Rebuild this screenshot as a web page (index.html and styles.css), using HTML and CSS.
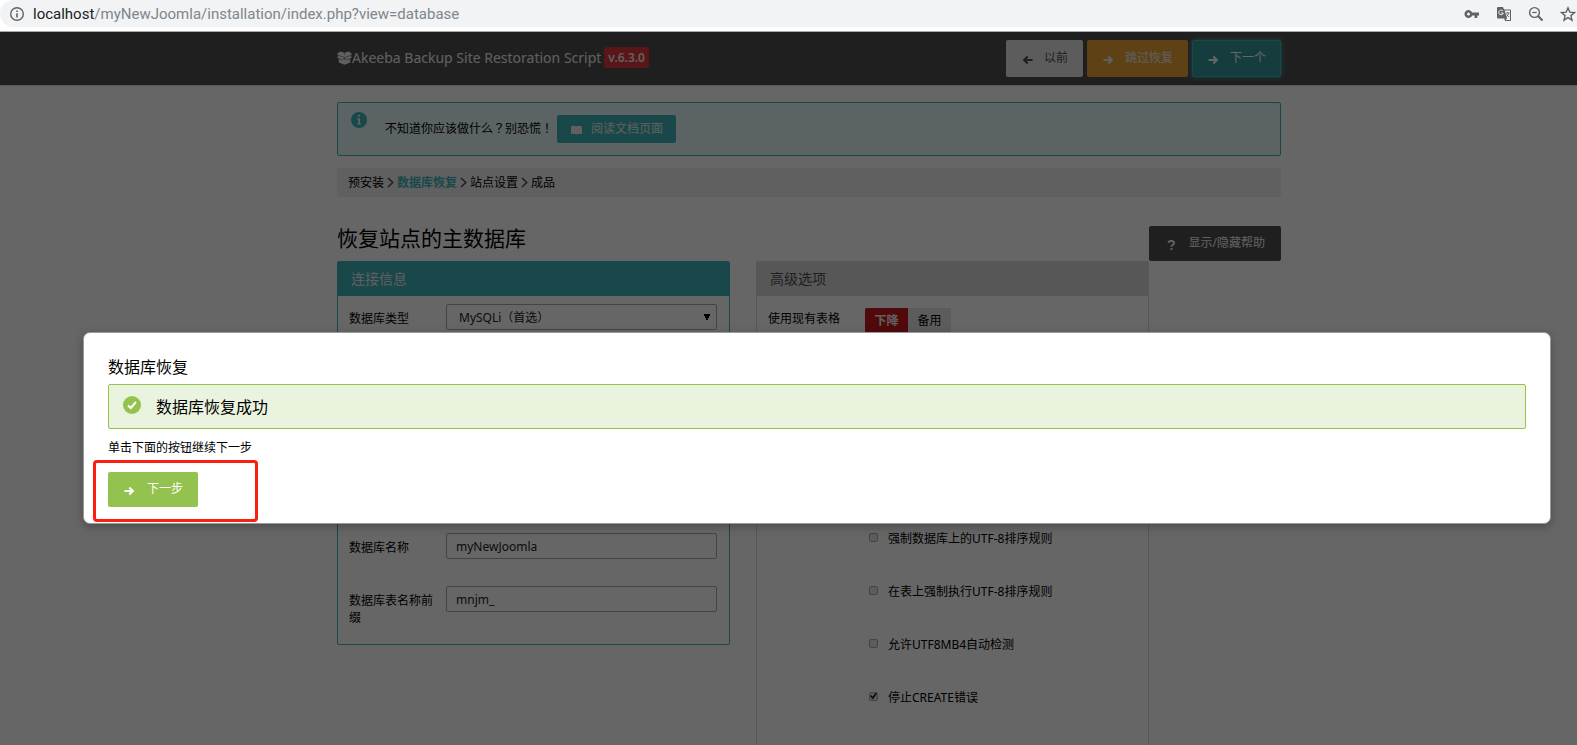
FILE: index.html
```
<!DOCTYPE html>
<html lang="zh-CN">
<head>
<meta charset="utf-8">
<title>Akeeba Backup Site Restoration Script</title>
<link rel="stylesheet" href="styles.css">
</head>
<body>
<svg class="defs" aria-hidden="true">
  <symbol id="arrow-right" viewBox="0 0 11 10"><path d="M0.5 5H9M5.3 1.6L8.8 5L5.3 8.4" fill="none" stroke="currentColor" stroke-width="2.1"/></symbol>
  <symbol id="arrow-left" viewBox="0 0 11 10"><path d="M10.5 5H2M5.7 1.6L2.2 5L5.7 8.4" fill="none" stroke="currentColor" stroke-width="2.1"/></symbol>
  <symbol id="chevron" viewBox="0 0 7 11"><path d="M1 1L5.7 5.5L1 10" fill="none" stroke="currentColor" stroke-width="1.6"/></symbol>
</svg>

<div class="browser">
  <div class="address">
    <svg class="info" viewBox="0 0 16 16" aria-hidden="true"><circle cx="8" cy="8" r="6.3" fill="none" stroke="currentColor" stroke-width="1.4"/><path d="M7.2 7.2h1.6v4.3H7.2zM7.2 4.5h1.6v1.6H7.2z" fill="currentColor"/></svg>
    <span class="url"><b>localhost</b>/myNewJoomla/installation/index.php?view=database</span>
    <button class="tool" aria-label="密码"><svg viewBox="0 0 16 16"><path d="M8.2 6.6A4 4 0 1 0 8.2 9.4H10.6V12H13.3V9.4H15V6.6ZM4.5 9.5A1.5 1.5 0 1 1 4.5 6.5A1.5 1.5 0 0 1 4.5 9.5Z" fill="currentColor" fill-rule="evenodd"/></svg></button>
    <button class="tool" aria-label="翻译"><svg viewBox="0 0 16 16"><path d="M2 1H7L8 3.5H14.2Q15 3.5 15 4.3V14.2Q15 15 14.2 15H9L8.2 12.5H2Q1 12.5 1 11.5V2Q1 1 2 1Z" fill="currentColor"/><path d="M8.7 4.4H14V14H9.7L11 12.4Z" fill="#f1f3f4"/><path d="M7 5.2A2.3 2.3 0 1 0 7.3 7H5.2" fill="none" stroke="#f1f3f4" stroke-width="1"/><path d="M9.7 7H13.6M11.6 6V7M12.9 7Q12.3 9.3 10.3 10.8M10.5 8Q11.3 9.9 13.1 10.9" fill="none" stroke="currentColor" stroke-width=".8"/></svg></button>
    <button class="tool" aria-label="缩放"><svg viewBox="0 0 16 16"><circle cx="6.5" cy="6.5" r="4.9" fill="none" stroke="currentColor" stroke-width="1.4"/><path d="M10 10L14.5 14.5" stroke="currentColor" stroke-width="1.9"/><path d="M4.3 6.5H8.7" stroke="currentColor" stroke-width="1.2"/></svg></button>
    <button class="tool" aria-label="收藏"><svg viewBox="0 0 16 16"><path d="M8 1.8L9.8 6.1L14.5 6.5L10.9 9.6L12 14.2L8 11.7L4 14.2L5.1 9.6L1.5 6.5L6.2 6.1Z" fill="none" stroke="currentColor" stroke-width="1.4"/></svg></button>
  </div>
</div>

<div class="page">
  <header class="header">
    <div class="container header-row">
      <div class="brand">
        <svg class="box" viewBox="0 0 15 14" aria-hidden="true"><path d="M3 .5L7.5 1.8L12 .5L15 3L13.4 4.6L15 6.4L13.2 7.6V11.6L7.5 13.8L1.8 11.6V7.6L0 6.4L1.6 4.6L0 3Z" fill="currentColor"/><path d="M2 4.6L7.5 6.6L13 4.6M7.5 6.6V9M1.8 7.6L5.5 9L7.5 6.8L9.5 9L13.2 7.6M7.5 2V4" fill="none" stroke="#514f50" stroke-width=".5"/></svg>
        <span>Akeeba Backup Site Restoration Script</span>
        <span class="version">v.6.3.0</span>
      </div>
      <nav class="actions">
        <button class="btn light"><svg><use href="#arrow-left"/></svg>以前</button>
        <button class="btn orange"><svg><use href="#arrow-right"/></svg>跳过恢复</button>
        <button class="btn focused"><svg><use href="#arrow-right"/></svg>下一个</button>
      </nav>
    </div>
  </header>

  <main class="main">
    <div class="container">
      <div class="notice">
        <svg class="badge" viewBox="0 0 18 18" aria-hidden="true"><circle cx="9" cy="9" r="8" fill="currentColor"/><path d="M8.2 4h1.8v1.8H8.2zM7.2 7.3H10v5h1v1.2H7.2v-1.2h1V8.5h-1z" fill="#e6f8fb"/></svg>
        <span class="message">不知道你应该做什么<span class="centred" lang="zh-TW">？</span>别恐慌<span class="centred" lang="zh-TW">！</span></span>
        <a class="btn small" href="#docs"><svg viewBox="0 0 11 10"><path d="M0 1.5Q3 0 5.5 1.3Q8 0 11 1.5V9H6.5L5.5 10L4.5 9H0Z" fill="currentColor"/></svg>阅读文档页面</a>
      </div>
      <ol class="steps">
        <li>预安装</li>
        <li><svg><use href="#chevron"/></svg><strong>数据库恢复</strong></li>
        <li><svg><use href="#chevron"/></svg>站点设置</li>
        <li><svg><use href="#chevron"/></svg>成品</li>
      </ol>

      <div class="title-row">
        <h1>恢复站点的主数据库</h1>
        <button class="btn dark"><svg viewBox="0 0 11 10"><path d="M2.4 2.8Q2.8 .9 5.4 .9T8.2 3Q8.2 4.1 6.6 4.9Q5.5 5.5 5.5 6.8M5.5 8V10" fill="none" stroke="currentColor" stroke-width="2"/></svg>显示/隐藏帮助</button>
      </div>

      <div class="panels">
        <section class="panel teal">
          <h2>连接信息</h2>
          <div class="field"><label for="dbtype">数据库类型</label><select id="dbtype"><option>MySQLi（首选）</option></select></div>
          <div class="covered"></div>
          <div class="field"><label for="dbname">数据库名称</label><input type="text" id="dbname" value="myNewJoomla"></div>
          <div class="field"><label for="prefix">数据库表名称前缀</label><input type="text" id="prefix" value="mnjm_"></div>
        </section>
        <section class="panel grey">
          <h2>高级选项</h2>
          <div class="field wide"><span>使用现有表格</span><div class="switch"><button class="on">下降</button><button>备用</button></div></div>
          <div class="covered"></div>
          <label class="check"><input type="checkbox">强制数据库上的UTF-8排序规则</label>
          <label class="check"><input type="checkbox">在表上强制执行UTF-8排序规则</label>
          <label class="check"><input type="checkbox">允许UTF8MB4自动检测</label>
          <label class="check"><input type="checkbox" checked>停止CREATE错误</label>
        </section>
      </div>
    </div>
  </main>

  <div class="overlay">
    <div class="modal" role="dialog" aria-labelledby="modal-title">
      <h3 id="modal-title">数据库恢复</h3>
      <div class="success">
        <svg viewBox="0 0 18 18" aria-hidden="true"><circle cx="9" cy="9" r="9" fill="currentColor"/><path d="M5 9.4L7.8 12L13 6" fill="none" stroke="#fff" stroke-width="2"/></svg>
        <span>数据库恢复成功</span>
      </div>
      <p>单击下面的按钮继续下一步</p>
      <div class="next">
        <button class="btn green"><svg><use href="#arrow-right"/></svg>下一步</button>
        <div class="marker"></div>
      </div>
    </div>
  </div>
</div>
</body>
</html>
```
FILE: styles.css
```
* { box-sizing: border-box; }
html, body { height: 100%; }
body {
  margin: 0;
  display: flex;
  flex-direction: column;
  overflow: hidden;
  background: #fff;
  color: #000;
  font: 12px/17px "Noto Sans", "Noto Sans CJK SC", sans-serif;
}
button, input, select { font: inherit; color: inherit; }
.defs { position: absolute; width: 0; height: 0; }

/* Browser bar */
.browser { height: 32px; padding-bottom: 4px; border-bottom: 1px solid #ababab; flex: none; }
.address {
  display: flex;
  align-items: center;
  height: 27px;
  padding-left: 9px;
  background: #f1f3f4;
  border-radius: 14px 0 0 14px;
  color: #5f6368;
}
.info { width: 16px; height: 16px; margin-right: 8px; }
.url { flex: 1; font: 15px/20px Roboto, sans-serif; color: #80868b; }
.url b { font-weight: 400; color: #202124; }
.tool { flex: none; width: 32px; height: 24px; padding: 4px 8px; border: 0; background: none; color: #5f6368; }
.tool:last-child { width: 25px; padding-right: 0; }
.tool svg { display: block; width: 16px; height: 16px; }

/* Page */
.page { position: relative; flex: 1; overflow: hidden; }
.header, .main { padding-left: 41px; }
.container { max-width: 944px; margin: 0 auto; }
.header { background: #514f50; color: #efefef; border-bottom: 1px solid #dadada; }
.header-row { display: flex; justify-content: space-between; padding: 8px 0; }
.brand { display: flex; align-items: center; padding-bottom: 2px; font-size: 14px; }
.box { width: 15px; height: 14px; }
.version { margin-left: 3px; padding: 2px 4px; background: #e2363c; border-radius: 3px; font-size: 12px; font-weight: 600; }
.actions { display: flex; gap: 4px; }

.btn {
  display: inline-flex;
  align-items: center;
  height: 35px;
  padding: 0 15px 2px;
  border: 0;
  border-radius: 2px;
  background: #40b5b8;
  color: #fff;
  font-size: 12px;
  text-decoration: none;
  white-space: nowrap;
}
.btn svg { width: 11px; height: 10px; margin: 4px 12px 0 1px; }
.actions .btn { height: 37px; }
.actions .btn svg { margin-right: 11px; }
.light { background: #e6e6e6; color: #514f50; }
.orange { background: #eba335; color: #efefef; }
.focused { background: #37989a; border: 1px solid #40b5b8; padding: 0 14px 2px; box-shadow: 0 0 4px #40b5b8; }
.btn.small { height: 28px; padding: 0 13px 2px; color: #efefef; }
.btn.small svg { margin-right: 9px; }
.dark { padding: 0 16px 2px; background: #514f50; color: #efefef; }
.green { background: #93c34e; }

.main { padding-top: 16px; }
.notice {
  display: flex;
  align-items: center;
  height: 54px;
  padding: 0 12px;
  border: 1px solid #40b5b8;
  border-radius: 2px;
  background: #e6f8fb;
}
.badge { width: 18px; height: 18px; margin: 0 17px 19px 0; color: #40b5b8; }
.message { margin-right: 4px; padding-bottom: 2px; }
.centred { font-family: "Noto Sans CJK TC", sans-serif; }
.steps { display: flex; align-items: center; height: 29px; margin: 12px 0 0; padding: 0 11px; list-style: none; background: #efefef; }
.steps li { display: flex; align-items: center; }
.steps svg { width: 7px; height: 11px; margin: 0 3px; color: #514f50; }
.steps strong { color: #40b5b8; }

.title-row { display: flex; justify-content: space-between; align-items: center; margin-top: 29px; height: 35px; }
h1 { margin: 0 0 12px; font-size: 21px; line-height: 28px; font-weight: 400; }
.panels { display: grid; grid-template-columns: minmax(0, 393fr) minmax(0, 393fr) minmax(0, 106fr); gap: 26px; align-items: start; }
.panel { border: 1px solid #40b5b8; border-radius: 2px; }
.teal { padding-bottom: 13px; }
.panel h2 { margin: 0; height: 34px; padding: 0 13px; font-size: 14px; line-height: 34px; font-weight: 400; background: #40b5b8; color: #efefef; }
.grey { border-color: #dadada; min-height: 600px; }
.panel.grey h2 { background: #dadada; color: #514f50; }
.field { display: flex; align-items: flex-start; padding: 8px 12px 0 11px; height: 53px; }
.field label { width: 97px; padding: 6px 8px 0 0; flex: none; }
.field input, .field select { flex: 1; min-width: 0; height: 26px; padding: 0 9px; border: 1px solid #aaa; border-radius: 2px; background-color: #fff; color: #222; }
.field select { appearance: none; padding-left: 12px; background: conic-gradient(from -27deg at 50% 100%, #000 54deg, transparent 0) right 5px center / 8px 7px no-repeat #fff; }
.covered { height: 176px; }
.grey .covered { height: 172px; }
.wide > span { width: 97px; padding-top: 6px; }
.switch { display: flex; padding-top: 4px; }
.switch button { width: 43px; height: 25px; padding: 0; border: 0; background: #e6e6e6; }
.switch .on { background: #c81b20; color: #efefef; font-weight: 700; border-radius: 2px 0 0 2px; }
.check { display: flex; align-items: center; height: 53px; padding: 0 0 19px 112px; }
.check input { appearance: none; width: 9px; height: 9px; margin: 0 10px 2px 0; border: 1px solid #aaa; border-radius: 2px; background: #e6e6e6; }
.check input:checked::before { content: ""; display: block; width: 7px; height: 7px; background: #222; clip-path: polygon(0 50%, 20% 35%, 40% 60%, 80% 0, 100% 15%, 42% 100%); }

/* Dialog */
.overlay { position: absolute; inset: 0; padding: 300px 26px 0 83px; background: rgba(0, 0, 0, .6); }
.modal { padding: 23px 24px 16px; background: #fff; border: 1px solid #999; border-radius: 7px; box-shadow: 0 3px 10px rgba(0, 0, 0, .25); }
h3 { margin: 0; font-size: 16px; line-height: 22px; font-weight: 400; }
.success { display: flex; align-items: center; height: 45px; margin-top: 6px; padding: 0 14px; border: 1px solid #93c34e; border-radius: 2px; background: #eaf3de; font-size: 16px; line-height: 22px; }
.success svg { width: 18px; height: 18px; margin: 0 15px 4px 0; color: #93c34e; }
.modal p { margin: 10px 0 16px; }
.next { position: relative; }
.marker { position: absolute; left: -15px; top: -12px; width: 165px; height: 62px; border: 3px solid #fb1f12; border-radius: 4px; }
```
